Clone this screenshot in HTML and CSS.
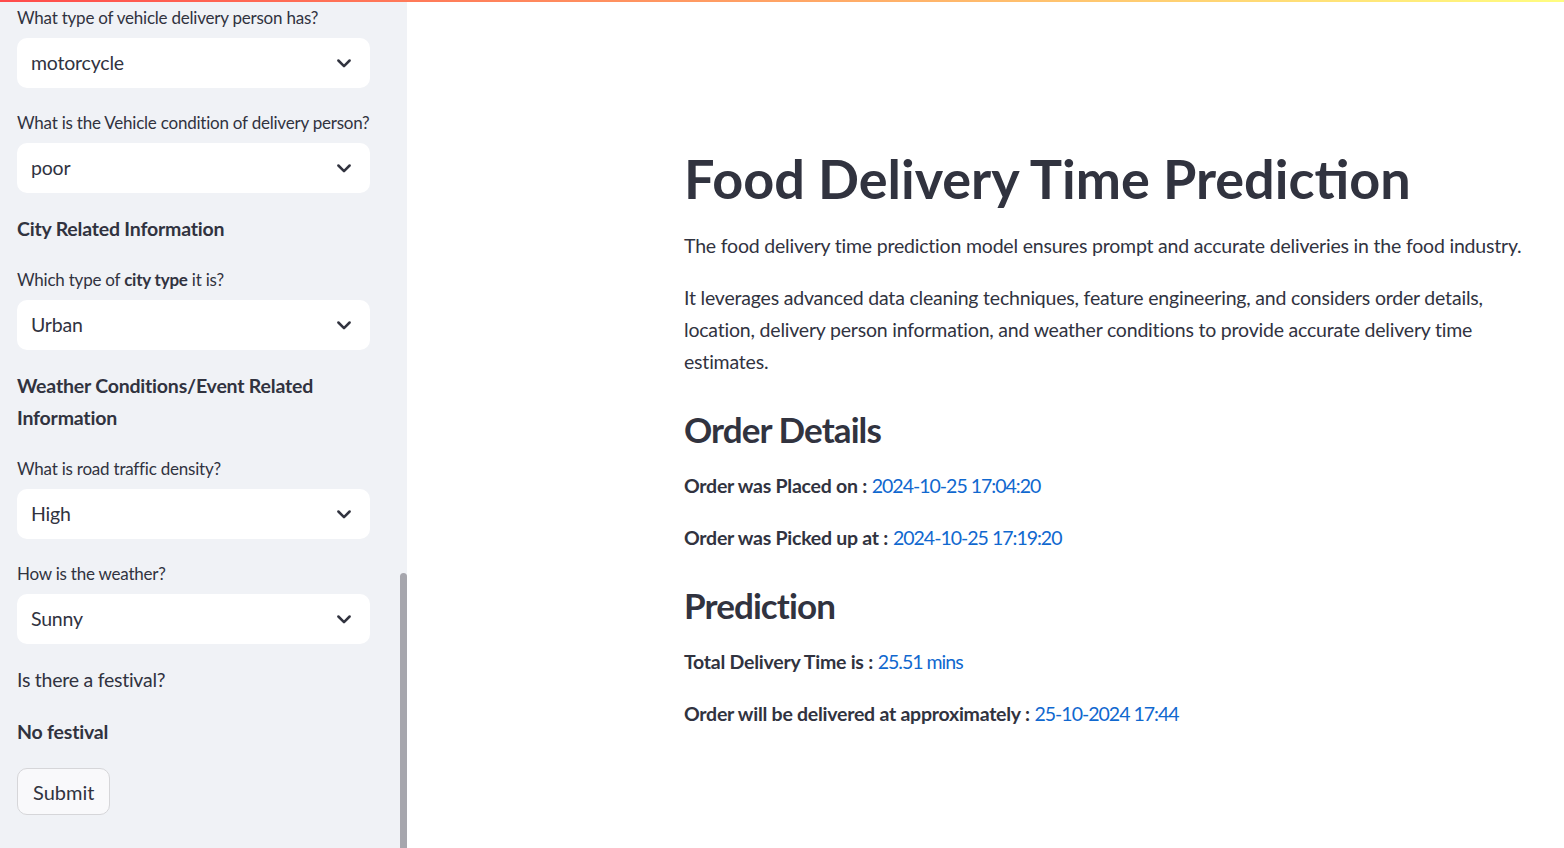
FILE: index.html
```html
<!DOCTYPE html>
<html lang="en">
<head>
<meta charset="utf-8">
<title>Food Delivery Time Prediction</title>
<link rel="stylesheet" href="styles.css">
</head>
<body>
<div class="decoration"></div>
<div class="app">
  <aside class="sidebar">
    <div class="sidebar-content">
      <div class="field">
        <div class="label">What type of vehicle delivery person has?</div>
        <div class="select"><span>motorcycle</span><svg class="chev" viewBox="0 0 16 16"><path d="M3.5 6l4.5 4.5 4.5-4.5"/></svg></div>
      </div>
      <div class="field">
        <div class="label">What is the Vehicle condition of delivery person?</div>
        <div class="select"><span>poor</span><svg class="chev" viewBox="0 0 16 16"><path d="M3.5 6l4.5 4.5 4.5-4.5"/></svg></div>
      </div>
      <p class="side-heading">City Related Information</p>
      <div class="field">
        <div class="label">Which type of <strong>city type</strong> it is?</div>
        <div class="select"><span>Urban</span><svg class="chev" viewBox="0 0 16 16"><path d="M3.5 6l4.5 4.5 4.5-4.5"/></svg></div>
      </div>
      <p class="side-heading">Weather Conditions/Event Related Information</p>
      <div class="field">
        <div class="label">What is road traffic density?</div>
        <div class="select"><span>High</span><svg class="chev" viewBox="0 0 16 16"><path d="M3.5 6l4.5 4.5 4.5-4.5"/></svg></div>
      </div>
      <div class="field">
        <div class="label">How is the weather?</div>
        <div class="select"><span>Sunny</span><svg class="chev" viewBox="0 0 16 16"><path d="M3.5 6l4.5 4.5 4.5-4.5"/></svg></div>
      </div>
      <p class="side-text">Is there a festival?</p>
      <p class="side-heading">No festival</p>
      <div><button class="btn">Submit</button></div>
    </div>
    <div class="scroll-thumb"></div>
  </aside>
  <main class="main">
    <div class="block">
      <h1 class="title">Food Delivery Time Prediction</h1>
      <p class="text first">The food delivery time prediction model ensures prompt and accurate deliveries in the food industry.</p>
      <p class="text">It leverages advanced data cleaning techniques, feature engineering, and considers order details, location, delivery person information, and weather conditions to provide accurate delivery time estimates.</p>
      <h2 class="header">Order Details</h2>
      <p class="text kv first-kv"><strong>Order was Placed on :</strong> <span class="val">2024-10-25 17:04:20</span></p>
      <p class="text kv"><strong>Order was Picked up at :</strong> <span class="val">2024-10-25 17:19:20</span></p>
      <h2 class="header">Prediction</h2>
      <p class="text kv first-kv"><strong>Total Delivery Time is :</strong> <span class="val">25.51 mins</span></p>
      <p class="text kv"><strong>Order will be delivered at approximately :</strong> <span class="val">25-10-2024 17:44</span></p>
    </div>
  </main>
</div>
</body>
</html>
```

FILE: styles.css
```css
* { box-sizing: border-box; }
html, body { margin: 0; padding: 0; }
body {
  font-family: Lato, "Noto Sans", "Liberation Sans", sans-serif;
  color: #31333f;
  background: #ffffff;
  width: 1564px;
  height: 848px;
  overflow: hidden;
}
.decoration {
  position: absolute;
  top: 0;
  left: 0;
  right: 0;
  height: 2px;
  background: linear-gradient(90deg, #ff4b4b, #fffd80);
  z-index: 10;
}
.app {
  display: flex;
  height: 848px;
}
.sidebar {
  position: relative;
  width: 407px;
  flex: 0 0 407px;
  background: #f0f2f6;
  overflow: hidden;
}
.sidebar-content {
  display: flex;
  flex-direction: column;
  gap: 20px;
  padding: 3px 37px 0 17px;
}
.field { display: flex; flex-direction: column; }
.label {
  font-size: 17px;
  letter-spacing: -0.22px;
  line-height: 30px;
  height: 30px;
  margin-bottom: 5px;
  white-space: nowrap;
}
.label strong { font-weight: 700; }
.select {
  height: 50px;
  background: #ffffff;
  border-radius: 10px;
  display: flex;
  align-items: center;
  justify-content: space-between;
  padding: 0 16px 0 14px;
  font-size: 19.5px;
  letter-spacing: -0.2px;
}
.select span { position: relative; top: -1px; }
.chev {
  width: 20px;
  height: 20px;
  fill: none;
  stroke: #31333f;
  stroke-width: 2;
  stroke-linecap: round;
  stroke-linejoin: round;
}
.side-heading {
  margin: 0;
  font-size: 19.5px;
  letter-spacing: -0.2px;
  line-height: 32px;
  font-weight: 700;
}
.side-text {
  margin: 0;
  font-size: 19.5px;
  letter-spacing: -0.25px;
  line-height: 32px;
}
.btn {
  font-family: inherit;
  font-size: 20px;
  color: #31333f;
  background: #f9f9fb;
  border: 1px solid #d6d6d9;
  border-radius: 10px;
  height: 47px;
  padding: 0 15px;
}
.scroll-thumb {
  position: absolute;
  left: 400px;
  top: 573px;
  width: 7px;
  height: 290px;
  background: #a6a6ad;
  border-radius: 4px 4px 0 0;
}
.main {
  flex: 1;
  padding: 146px 0 0 277px;
}
.block {
  width: 860px;
  display: flex;
  flex-direction: column;
}
.title {
  margin: 0;
  font-size: 54px;
  line-height: 66px;
  font-weight: 700;
}
.text {
  margin: 20px 0 0;
  font-size: 19.5px;
  letter-spacing: -0.2px;
  line-height: 32px;
}
.text.first { margin-top: 18px; }
.header {
  margin: 29px 0 0;
  font-size: 35px;
  letter-spacing: -0.9px;
  line-height: 44px;
  font-weight: 700;
}
.kv strong { font-weight: 700; letter-spacing: -0.25px; }
.text.first-kv { margin-top: 19px; }
.val { color: #1068cf; letter-spacing: -1px; }
```
